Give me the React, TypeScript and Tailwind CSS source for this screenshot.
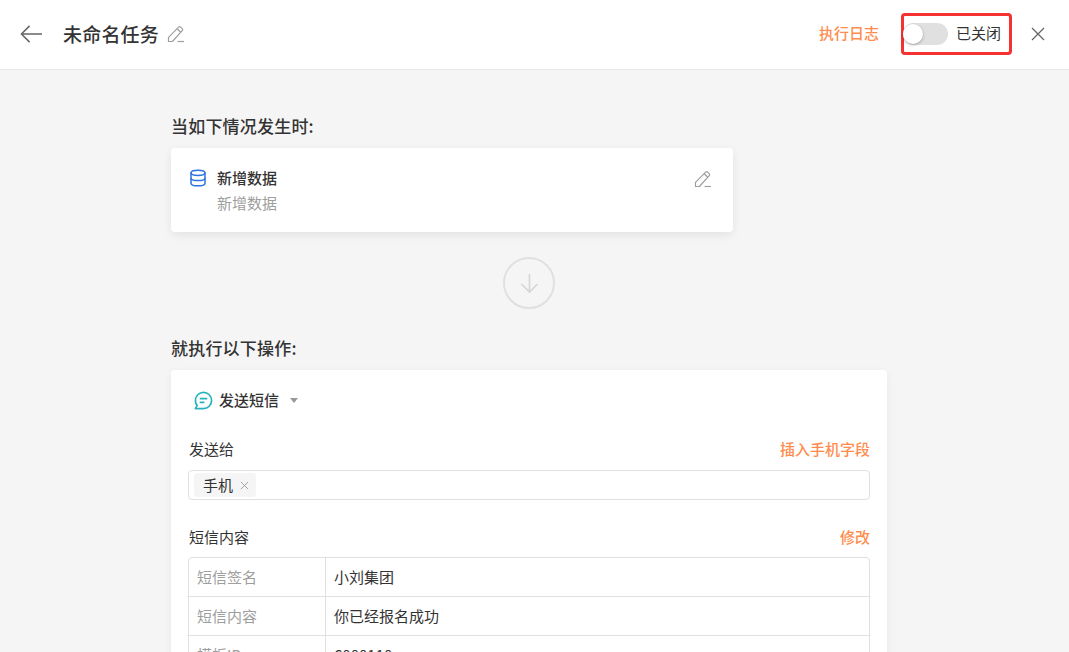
import React from 'react';

const font = 'font-["Noto_Sans_CJK_SC","Noto_Sans",sans-serif]';

function PencilIcon({ className }: { className?: string }) {
  return (
    <svg viewBox="0 0 18 18" fill="none" stroke="currentColor" strokeWidth="1.2" className={className}>
      <path d="M1.5 16.5 L1.5 12.4 L11.6 2.2 C12.2 1.6 13 1.6 13.6 2.1 L15.2 3.7 C15.8 4.3 15.8 5.1 15.2 5.7 L5.4 16.5 Z" strokeLinejoin="round" />
      <path d="M10.2 3.7 L13.8 7.2" />
      <path d="M10.5 16.5 H17" />
    </svg>
  );
}

function TableRow({ label, value, last }: { label: string; value: string; last?: boolean }) {
  return (
    <div className={`flex h-[39px] shrink-0 ${last ? '' : 'border-b border-[#e0e0e0]'}`}>
      <div className="w-[137px] shrink-0 border-r border-[#e0e0e0] pl-2 text-[15px] leading-[38px] text-[#9e9e9e]">{label}</div>
      <div className="pl-2 text-[15px] leading-[38px] text-[#333]">{value}</div>
    </div>
  );
}

export default function App() {
  return (
    <div className={`flex h-[652px] w-[1069px] flex-col overflow-hidden bg-[#f5f5f5] ${font}`}>
      {/* Header */}
      <header className="flex h-[70px] shrink-0 items-center border-b border-[#e8e8e8] bg-white pb-[2px] pl-5 pr-[24px]">
        <svg viewBox="0 0 24 20" fill="none" stroke="#666" strokeWidth="1.6" className="h-[20px] w-[23px]">
          <path d="M23 10 H1.5 M10 1.5 L1.5 10 L10 18.5" />
        </svg>
        <h1 className="ml-5 text-[19px] font-medium leading-none tracking-[0.2px] text-[#333]">未命名任务</h1>
        <PencilIcon className="ml-[8px] h-[18px] w-[18px] text-[#9e9e9e]" />
        <div className="ml-auto flex items-center">
          <span className="text-[15px] font-medium text-[#ff8c4d]">执行日志</span>
          <div className="ml-[22px] flex h-[42px] w-[111px] items-center rounded-[4px] border-[3px] border-[#f5322f]">
            <div className="-ml-px h-[22px] w-[45px] rounded-full bg-[#e0e0e0]">
              <div className="h-[20px] w-[20px] translate-y-[1px] rounded-full bg-white shadow-[0_1px_3px_rgba(0,0,0,0.3)]" />
            </div>
            <span className="ml-[8px] text-[15px] text-[#333]">已关闭</span>
          </div>
          <svg viewBox="0 0 14 14" fill="none" stroke="#666" strokeWidth="1.3" className="ml-[19px] h-[14px] w-[14px]">
            <path d="M1 1 L13 13 M13 1 L1 13" />
          </svg>
        </div>
      </header>

      {/* Content */}
      <main className="flex flex-1 flex-col overflow-hidden pl-[171px]">
        <h2 className="mt-[44px] text-[17px] font-medium leading-[24px] tracking-[0.2px] text-[#333]">当如下情况发生时:</h2>
        <section className="mt-[10px] flex h-[84px] w-[562px] shrink-0 rounded-[4px] bg-white pl-[18px] pr-[21px] pt-[18px] shadow-[0_3px_10px_rgba(0,0,0,0.08)]">
          <svg viewBox="0 0 18 18" fill="none" stroke="#2f73e0" strokeWidth="1.5" className="mt-[3px] h-[18px] w-[18px]">
            <ellipse cx="9" cy="3.8" rx="7" ry="2.6" />
            <path d="M2 3.8 V14.2 C2 15.6 5 16.8 9 16.8 C13 16.8 16 15.6 16 14.2 V3.8" />
            <path d="M2 9 C2 10.4 5 11.6 9 11.6 C13 11.6 16 10.4 16 9" />
          </svg>
          <div className="ml-[10px]">
            <div className="text-[15px] font-medium leading-[24px] text-[#333]">新增数据</div>
            <div className="mt-[1px] text-[15px] leading-[24px] text-[#9e9e9e]">新增数据</div>
          </div>
          <PencilIcon className="ml-auto mt-[4px] h-[18px] w-[18px] text-[#9e9e9e]" />
        </section>

        <div className="ml-[332px] mt-[25px] flex h-[52px] w-[52px] shrink-0 items-center justify-center rounded-full border-2 border-[#e0e0e0]">
          <svg viewBox="0 0 20 22" fill="none" stroke="#d6d6d6" strokeWidth="1.7" className="h-[21px] w-[19px]">
            <path d="M10 1 V20 M1.5 11.5 L10 20 L18.5 11.5" />
          </svg>
        </div>

        <h2 className="mt-[27px] text-[17px] font-medium leading-[24px] tracking-[0.2px] text-[#333]">就执行以下操作:</h2>
        <section className="mt-[10px] flex w-[716px] flex-1 flex-col rounded-t-[4px] bg-white px-[17px] pt-[18px] shadow-[0_3px_10px_rgba(0,0,0,0.06)]">
          <div className="flex h-[24px] shrink-0 items-center pl-[6px]">
            <svg viewBox="0 0 20 20" fill="none" stroke="#26b3bd" strokeWidth="1.8" className="h-[19px] w-[19px]">
              <path d="M10 1.5 C14.8 1.5 18.5 5.2 18.5 10 C18.5 14.8 14.8 18.5 10 18.5 H1.5 L3.3 15.2 C2 13.8 1.5 12 1.5 10 C1.5 5.2 5.2 1.5 10 1.5 Z" strokeLinejoin="round" />
              <path d="M6 8 H14 M6 12 H11" />
            </svg>
            <span className="ml-[6px] text-[15px] font-medium text-[#333]">发送短信</span>
            <span className="ml-[11px] h-0 w-0 border-x-[4px] border-t-[5px] border-x-transparent border-t-[#999]" />
          </div>

          <div className="mt-[27px] flex h-[20px] shrink-0 items-center justify-between pl-px">
            <span className="text-[15px] text-[#333]">发送给</span>
            <span className="text-[15px] font-medium text-[#ff8c4d]">插入手机字段</span>
          </div>
          <div className="mt-[11px] flex h-[30px] shrink-0 items-center rounded-[4px] border border-[#e0e0e0] pl-[5px]">
            <div className="flex h-[24px] w-[62px] items-center rounded-[3px] bg-[#f5f5f5] pl-[9px] text-[15px] text-[#333]">
              手机
              <svg viewBox="0 0 10 10" fill="none" stroke="#999" strokeWidth="1" className="ml-[7px] h-[9px] w-[9px]">
                <path d="M1 1 L9 9 M9 1 L1 9" />
              </svg>
            </div>
          </div>

          <div className="mt-[27px] flex h-[20px] shrink-0 items-center justify-between pl-px">
            <span className="text-[15px] text-[#333]">短信内容</span>
            <span className="text-[15px] font-medium text-[#ff8c4d]">修改</span>
          </div>
          <div className="mt-[10px] flex shrink-0 flex-col rounded-t-[4px] border border-[#e0e0e0]">
            <TableRow label="短信签名" value="小刘集团" />
            <TableRow label="短信内容" value="你已经报名成功" />
            <TableRow label="模板ID" value="6000110" last />
          </div>
        </section>
      </main>
    </div>
  );
}
